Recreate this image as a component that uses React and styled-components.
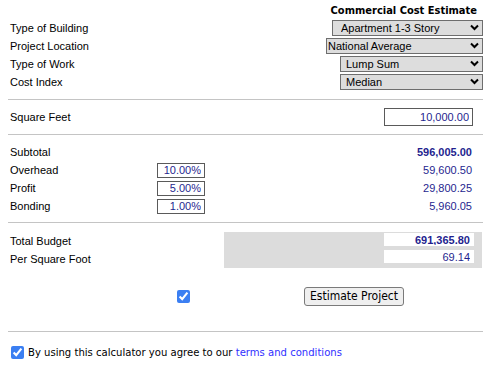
import React, { useState } from "react";
import styled, { createGlobalStyle } from "styled-components";

const GlobalStyle = createGlobalStyle`
  html, body {
    margin: 0;
    padding: 0;
    background: #ffffff;
  }
  body {
    font-family: "Liberation Sans", Arial, sans-serif;
    font-size: 11px;
    color: #000;
  }
`;

const navy = "#1f1f8f";
const tahoma = `Tahoma, "DejaVu Sans Condensed", "DejaVu Sans", sans-serif`;

const Page = styled.div`
  width: 475px;
  margin-left: 8px;
  padding-top: 2px;
`;

const Title = styled.div`
  height: 17px;
  display: flex;
  align-items: center;
  justify-content: flex-end;
  padding-right: 6px;
  font-family: ${tahoma};
  font-weight: bold;
  font-size: 11px;
`;

const Row = styled.div`
  display: grid;
  grid-template-columns: ${(p) => p.$cols || "1fr auto"};
  align-items: center;
  height: 18px;
`;

const Label = styled.div`
  padding-left: 2px;
  white-space: nowrap;
`;

const Divider = styled.hr`
  border: none;
  border-top: 1px solid #c4c4c4;
  margin: ${(p) => p.$top}px 0 ${(p) => p.$bottom}px;
  height: 0;
`;

const SelectWrap = styled.div`
  position: relative;
  width: ${(p) => p.$w}px;
  height: 16px;
  justify-self: end;
`;

const Select = styled.select`
  appearance: none;
  -webkit-appearance: none;
  width: 100%;
  height: 16px;
  box-sizing: border-box;
  margin: 0;
  padding: 0 18px 0 ${(p) => p.$pad}px;
  border: 1px solid #6e6e6e;
  border-radius: 0;
  background: #dddddd;
  font-family: "Liberation Sans", Arial, sans-serif;
  font-size: 11px;
  color: #000;
  line-height: 14px;
  outline: none;
`;

const Chevron = styled.svg`
  position: absolute;
  right: 4px;
  top: 4px;
  pointer-events: none;
`;

const TextInput = styled.input`
  box-sizing: border-box;
  width: ${(p) => p.$w}px;
  height: ${(p) => p.$h}px;
  margin: 0 ${(p) => p.$mr || 0}px 0 0;
  padding: 0 3px;
  border: 1px solid ${(p) => (p.$flat ? "#ffffff" : "#5a5a5a")};
  border-radius: 0;
  background: #fff;
  font-family: "Liberation Sans", Arial, sans-serif;
  font-size: 11px;
  font-weight: ${(p) => (p.$bold ? "bold" : "normal")};
  color: ${navy};
  text-align: right;
  justify-self: end;
  outline: none;
`;

const Value = styled.div`
  text-align: right;
  padding-right: 11px;
  color: ${navy};
  font-weight: ${(p) => (p.$bold ? "bold" : "normal")};
`;

const Section = styled.div`
  display: flex;
  flex-direction: column;
`;

const TotalsRow = styled.div`
  display: grid;
  grid-template-columns: 216px 1fr;
  height: 36px;
`;

const TotalsLabels = styled.div`
  display: flex;
  flex-direction: column;
`;

const TotalsBox = styled.div`
  background: #dcdcdc;
  width: 258px;
  display: flex;
  flex-direction: column;
  align-items: flex-end;
  padding-right: 8px;
  box-sizing: border-box;
  gap: 4px;
  padding-top: 1px;
`;

const ActionRow = styled.div`
  display: flex;
  align-items: center;
  height: 22px;
  margin-top: 17px;
  padding-left: 169px;
`;

const Check = styled.input`
  width: 13px;
  height: 13px;
  margin: 0;
  accent-color: #3b7ff2;
`;

const Button = styled.button`
  margin-left: 114px;
  height: 19px;
  padding: 0 5px;
  border: 1px solid #7a7a7a;
  border-radius: 3px;
  background: #efefef;
  font-family: ${tahoma};
  font-size: 12px;
  color: #000;
  line-height: 17px;
`;

const Agree = styled.label`
  display: flex;
  align-items: center;
  gap: 4px;
  padding-left: 3px;
  margin-top: 14px;
  font-family: ${tahoma};
  font-size: 11.2px;
  color: #000;
`;

const Link = styled.a`
  color: #3030ff;
  text-decoration: none;
`;

const ChevronIcon = () => (
  <Chevron width="9" height="7" viewBox="0 0 9 7">
    <path d="M1 1.5 L4.5 5 L8 1.5" fill="none" stroke="#000" strokeWidth="2" />
  </Chevron>
);

const SelectRow = ({ label, options, w, pad }) => (
  <Row>
    <Label>{label}</Label>
    <SelectWrap $w={w}>
      <Select $pad={pad} defaultValue={options[0]}>
        {options.map((o) => (
          <option key={o}>{o}</option>
        ))}
      </Select>
      <ChevronIcon />
    </SelectWrap>
  </Row>
);

const rates = [
  { label: "Overhead", pct: "10.00%", amount: "59,600.50" },
  { label: "Profit", pct: "5.00%", amount: "29,800.25" },
  { label: "Bonding", pct: "1.00%", amount: "5,960.05" },
];

const App = () => {
  const [agreed, setAgreed] = useState(true);
  const [include, setInclude] = useState(true);

  return (
    <Page>
      <GlobalStyle />
      <Title>Commercial Cost Estimate</Title>
      <SelectRow
        label="Type of Building"
        options={["Apartment 1-3 Story", "Office 1-4 Story", "Warehouse"]}
        w={151}
        pad={8}
      />
      <SelectRow
        label="Project Location"
        options={["National Average", "Northeast", "Southwest"]}
        w={157}
        pad={1}
      />
      <SelectRow label="Type of Work" options={["Lump Sum", "Design-Build"]} w={143} pad={5} />
      <SelectRow label="Cost Index" options={["Median", "Low", "High"]} w={143} pad={5} />

      <Divider $top={8} $bottom={8} />
      <Row>
        <Label>Square Feet</Label>
        <TextInput defaultValue="10,000.00" $w={89} $h={18} $mr={10} />
      </Row>
      <Divider $top={8} $bottom={8} />

      <Section>
        <Row $cols="149px 48px 1fr">
          <Label>Subtotal</Label>
          <span />
          <Value $bold>596,005.00</Value>
        </Row>
        {rates.map((r) => (
          <Row key={r.label} $cols="149px 48px 1fr">
            <Label>{r.label}</Label>
            <TextInput defaultValue={r.pct} $w={48} $h={15} />
            <Value>{r.amount}</Value>
          </Row>
        ))}
      </Section>

      <Divider $top={7} $bottom={9} />

      <TotalsRow>
        <TotalsLabels>
          <Row>
            <Label>Total Budget</Label>
          </Row>
          <Row>
            <Label>Per Square Foot</Label>
          </Row>
        </TotalsLabels>
        <TotalsBox>
          <TextInput readOnly value="691,365.80" $w={90} $h={13} $flat $bold />
          <TextInput readOnly value="69.14" $w={90} $h={13} $flat />
        </TotalsBox>
      </TotalsRow>

      <ActionRow>
        <Check type="checkbox" checked={include} onChange={(e) => setInclude(e.target.checked)} />
        <Button>Estimate Project</Button>
      </ActionRow>

      <Divider $top={24} $bottom={0} />

      <Agree>
        <Check type="checkbox" checked={agreed} onChange={(e) => setAgreed(e.target.checked)} />
        <span>
          By using this calculator you agree to our <Link href="#">terms and conditions</Link>
        </span>
      </Agree>
    </Page>
  );
};

export default App;
